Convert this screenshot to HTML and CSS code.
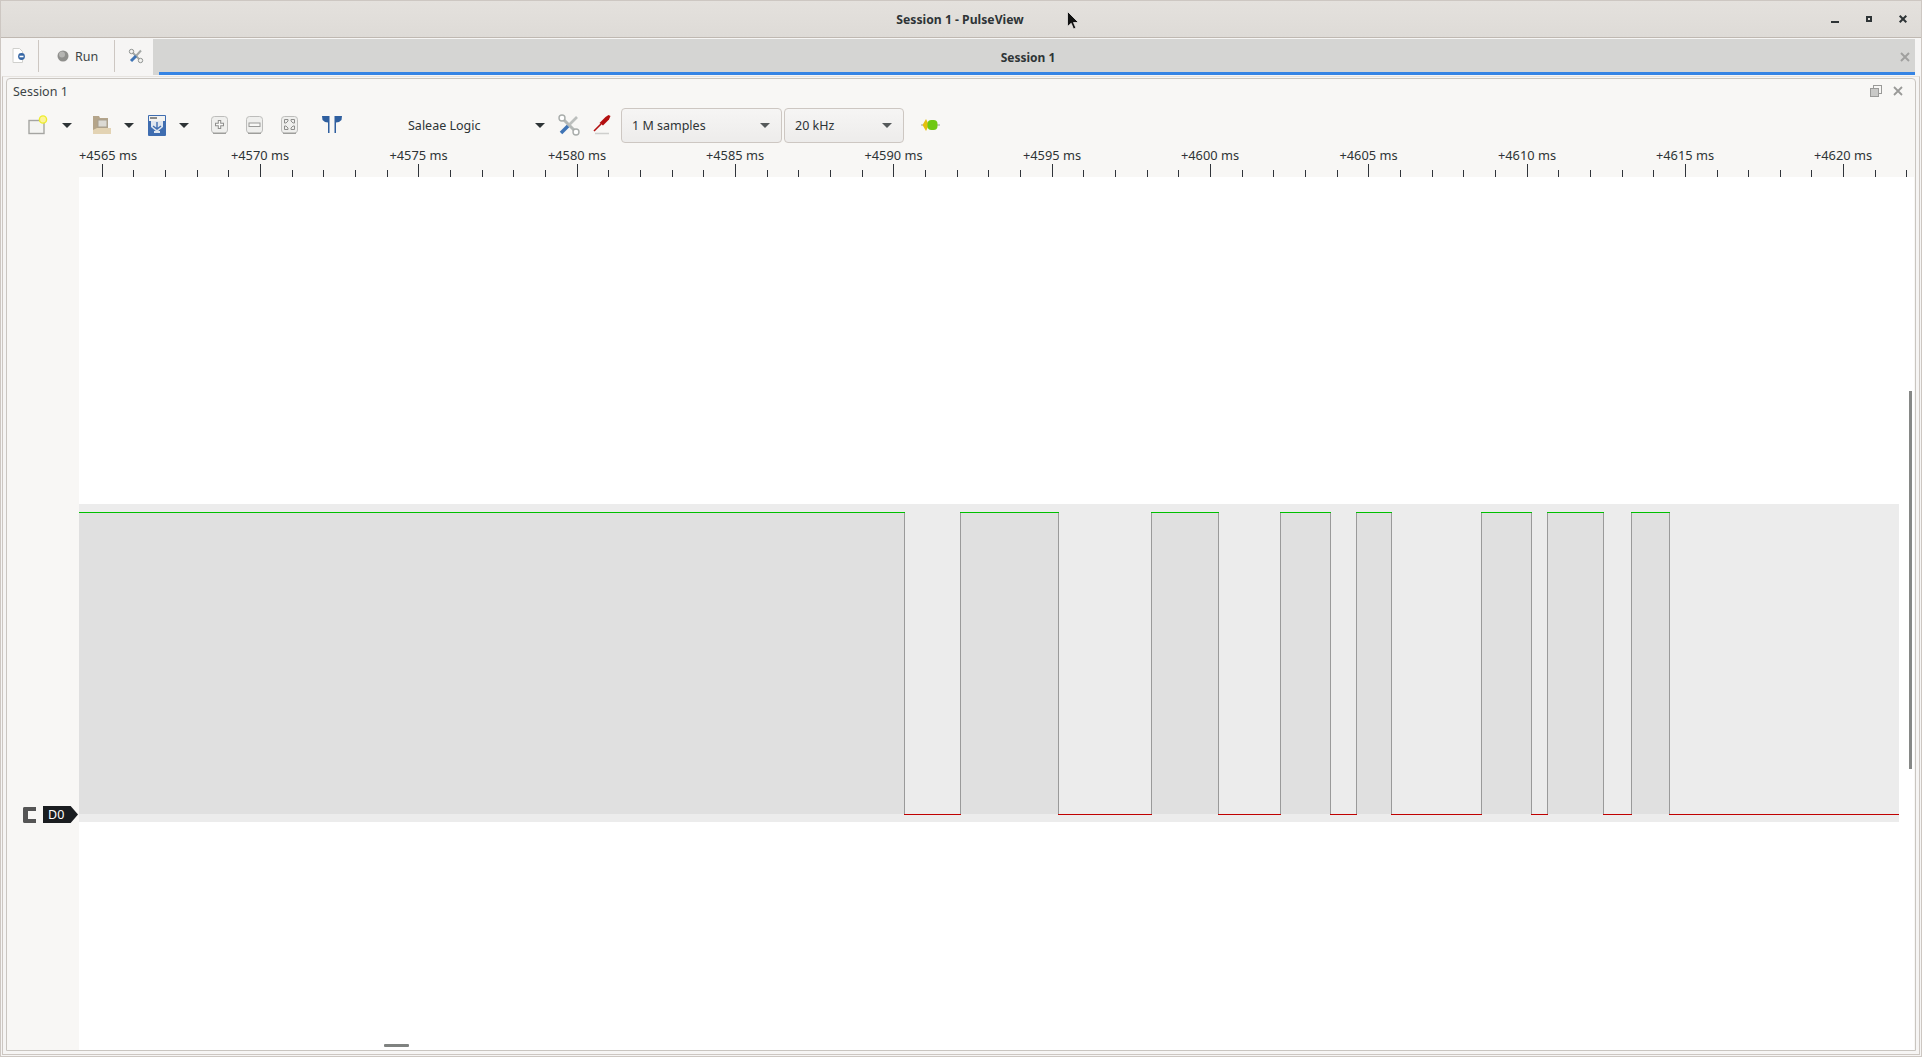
FILE: index.html
```html
<!DOCTYPE html>
<html lang="en">

<head>
  <meta charset="UTF-8">
  <title>Session 1 - PulseView</title>
  <link rel="stylesheet" href="styles.css">
</head>

<body>
  <div class="window">
    <div class="titlebar">
      <span class="title">Session 1 - PulseView</span>
      <div class="wm-buttons">
        <svg width="12" height="12" viewBox="0 0 12 12"><path d="M2 9h8" stroke="#2e3436" stroke-width="2"/></svg>
        <svg width="12" height="12" viewBox="0 0 12 12"><rect x="4" y="4" width="4" height="4" fill="none" stroke="#2e3436" stroke-width="2"/></svg>
        <svg width="12" height="12" viewBox="0 0 12 12"><path d="M2.7 2.7l6.600 6.600M9.300 2.700l-6.600 6.600" stroke="#2e3436" stroke-width="2"/></svg>
      </div>
    </div>

    <div class="tabrow">
      <div class="tabbtn tabbtn-doc">
        <svg width="16" height="16" viewBox="0 0 16 16">
          <path d="M2 .5h6.500l3 3v11H2z" fill="#fff" stroke="#d0d0cd"/>
          <circle cx="10.500" cy="8.500" r="3.400" fill="#3465a4"/>
          <path d="M8.500 8.500h4" stroke="#fff" stroke-width="1.600"/>
        </svg>
      </div>
      <div class="tabbtn tabbtn-run">
        <svg width="12" height="12" viewBox="0 0 12 12"><circle cx="6" cy="6" r="5.500" fill="#8f8f8c"/><circle cx="5" cy="4.500" r="3" fill="#b5b5b2"/></svg>
        <span>Run</span>
      </div>
      <div class="tabbtn tabbtn-tools">
        <svg width="16" height="16" viewBox="0 0 16 16">
          <path d="M3.500 3.500l9 9" stroke="#a4a8a6" stroke-width="2"/>
          <path d="M13 2.500L8 8" stroke="#a4a8a6" stroke-width="2"/>
          <path d="M8 8l-5 5" stroke="#3f74b5" stroke-width="3"/>
          <circle cx="3.500" cy="3.500" r="2.200" fill="#f2f2f0" stroke="#8f9391"/>
          <circle cx="12.500" cy="12.500" r="2.200" fill="#f2f2f0" stroke="#8f9391"/>
        </svg>
      </div>
      <div class="tabstrip">
        <span class="tab-label">Session 1</span>
        <svg class="tab-close" width="10" height="10" viewBox="0 0 10 10"><path d="M1 1l8 8M9 1L1 9" stroke="#a0a09e" stroke-width="2"/></svg>
      </div>
    </div>

    <div class="tabpane">
      <div class="panel">
        <div class="dock-title">
          <span>Session 1</span>
          <div class="dock-buttons">
            <svg width="12" height="12" viewBox="0 0 12 12"><rect x="3.500" y=".5" width="8" height="8" fill="none" stroke="#9a9a98"/><rect x=".5" y="3.500" width="8" height="8" fill="#c9c9c7" stroke="#9a9a98"/></svg>
            <svg width="10" height="10" viewBox="0 0 10 10"><path d="M1 1l8 8M9 1L1 9" stroke="#9a9a98" stroke-width="1.800"/></svg>
          </div>
        </div>

        <div class="toolbar">
          <svg class="tool tool-new" width="20" height="20" viewBox="0 0 20 20">
            <rect x="1" y="5.500" width="15" height="13" fill="#f4f4f2" stroke="#a5a5a2" stroke-width="1.400"/>
            <circle cx="15" cy="4.500" r="3.600" fill="#fdf39a" stroke="#ecec2c" stroke-width="1.400"/>
          </svg>
          <span class="arrow arrow-new"></span>
          <svg class="tool tool-open" width="20" height="20" viewBox="0 0 20 20">
            <path d="M1 1h6l1 2h8v15H1z" fill="#b5a58a"/>
            <rect x="6" y="5" width="9" height="7" fill="#dcdad4" stroke="#a8a08f"/>
            <path d="M1 19v-4l4-2h14v6z" fill="#e3d3b3"/>
          </svg>
          <span class="arrow arrow-open"></span>
          <svg class="tool tool-save" width="18" height="21" viewBox="0 0 18 21">
            <rect width="18" height="21" rx="1" fill="#3f6db0"/>
            <rect x="1" y="1" width="16" height="5" fill="#f3f3f1"/>
            <rect x="2" y="2" width="7" height="2" fill="#8a8a88"/>
            <path d="M3 6h12v6l-6 5-6-5z" fill="#dfe6ef"/>
            <path d="M9 7v7M5 11l4 3 4-3" stroke="#3f6db0" stroke-width="1.400" fill="none"/>
            <rect x="6" y="16" width="6" height="2" fill="#dfe6ef"/>
          </svg>
          <span class="arrow arrow-save"></span>
          <svg class="tool tool-zoomin" width="17" height="18" viewBox="0 0 17 18">
            <rect x=".5" y=".5" width="16" height="16.500" rx="3" fill="#efefed" stroke="#bdbdbb"/>
            <path d="M2 17.300h13" stroke="#8f8f8d"/>
            <path d="M8.500 4v9M4 8.500h9" stroke="#8e8e8c" stroke-width="3.400"/>
            <path d="M8.500 5v7M5 8.500h7" stroke="#f8f8f6" stroke-width="1.400"/>
          </svg>
          <svg class="tool tool-zoomout" width="17" height="18" viewBox="0 0 17 18">
            <rect x=".5" y=".5" width="16" height="16.500" rx="3" fill="#efefed" stroke="#bdbdbb"/>
            <path d="M2 17.300h13" stroke="#8f8f8d"/>
            <rect x="3" y="7" width="11" height="3.500" fill="#f8f8f6" stroke="#9a9a98"/>
          </svg>
          <svg class="tool tool-fit" width="17" height="18" viewBox="0 0 17 18">
            <rect x=".5" y=".5" width="16" height="16.500" rx="3" fill="#efefed" stroke="#bdbdbb"/>
            <path d="M2 17.300h13" stroke="#8f8f8d"/>
            <path d="M3.500 3.500h3.500v1.500l-2 2h-1.500zM13.500 3.500h-3.500v1.500l2 2h1.500zM3.500 13.500h3.500v-1.500l-2-2h-1.500zM13.500 13.500h-3.500v-1.500l2-2h1.500z" fill="none" stroke="#8e8e8c"/>
          </svg>
          <svg class="tool tool-cursor" width="20" height="17" viewBox="0 0 20 17">
            <path d="M0 0h7.500v17H6V6.500L3 6 .5 4zM20 0h-7.500v17H14V6.500L17 6 19.500 4z" fill="#2f5f9f"/>
          </svg>
          <span class="device">Saleae Logic</span>
          <span class="arrow arrow-device"></span>
          <svg class="tool tool-conf" width="22" height="22" viewBox="0 0 22 22">
            <path d="M4 4l14 14" stroke="#b4b8b6" stroke-width="3"/>
            <path d="M19 3L11 11" stroke="#bcbfbd" stroke-width="2.600"/>
            <path d="M10 12l-7 7" stroke="#3f74b5" stroke-width="3.600"/>
            <circle cx="18" cy="18" r="3" fill="#fff" stroke="#a9adab" stroke-width="1.400"/>
            <circle cx="4" cy="4" r="3" fill="#fff" stroke="#a9adab" stroke-width="1.400"/>
          </svg>
          <svg class="tool tool-probe" width="19" height="20" viewBox="0 0 19 20">
            <path d="M1 16L8 9" stroke="#b30f0f" stroke-width="1.600"/>
            <path d="M6.500 8l6-6 3-2 2 1-1.500 3.500-6 6z" fill="#b30f0f"/>
            <path d="M2 18.500h14" stroke="#cfcfcd" stroke-width="1.500"/>
          </svg>
          <div class="combo combo-samples"><span>1 M samples</span><span class="arrow arrow-combo"></span></div>
          <div class="combo combo-rate"><span>20 kHz</span><span class="arrow arrow-combo"></span></div>
          <svg class="tool tool-go" width="19" height="12" viewBox="0 0 19 12">
            <path d="M0 6h19" stroke="#9a9a98"/>
            <path d="M5 0L1.500 6 5 12 8 6z" fill="#e4c00f"/>
            <rect x="6.500" y="1" width="10" height="10" rx="4" fill="#6fc813"/>
          </svg>
        </div>

        <svg class="ruler" width="1835" height="32" viewBox="79 145 1835 32">
          <g class="ruler-labels">
            <text x="108" y="159.500">+4565 ms</text>
            <text x="260" y="159.500">+4570 ms</text>
            <text x="418.500" y="159.500">+4575 ms</text>
            <text x="577" y="159.500">+4580 ms</text>
            <text x="735" y="159.500">+4585 ms</text>
            <text x="893.500" y="159.500">+4590 ms</text>
            <text x="1052" y="159.500">+4595 ms</text>
            <text x="1210" y="159.500">+4600 ms</text>
            <text x="1368.500" y="159.500">+4605 ms</text>
            <text x="1527" y="159.500">+4610 ms</text>
            <text x="1685" y="159.500">+4615 ms</text>
            <text x="1843" y="159.500">+4620 ms</text>
          </g>
          <path class="ticks" d="M102.500 164V177M260.500 164V177M418.500 164V177M577.500 164V177M735.500 164V177M893.500 164V177M1052.500 164V177M1210.500 164V177M1368.500 164V177M1527.500 164V177M1685.500 164V177M1843.500 164V177"/>
          <path class="ticks" d="M133.500 170V177M165.500 170V177M197.500 170V177M228.500 170V177M292.500 170V177M323.500 170V177M355.500 170V177M387.500 170V177M450.500 170V177M482.500 170V177M513.500 170V177M545.500 170V177M608.500 170V177M640.500 170V177M672.500 170V177M703.500 170V177M767.500 170V177M798.500 170V177M830.500 170V177M862.500 170V177M925.500 170V177M957.500 170V177M988.500 170V177M1020.500 170V177M1083.500 170V177M1115.500 170V177M1147.500 170V177M1178.500 170V177M1242.500 170V177M1273.500 170V177M1305.500 170V177M1337.500 170V177M1400.500 170V177M1432.500 170V177M1463.500 170V177M1495.500 170V177M1558.500 170V177M1590.500 170V177M1622.500 170V177M1653.500 170V177M1717.500 170V177M1748.500 170V177M1780.500 170V177M1811.500 170V177M1875.500 170V177M1906.500 170V177"/>
        </svg>

        <div class="trace-area">
          <div class="gutter">
            <div class="channel">
              <span class="grip"></span>
              <span class="tag">D0</span>
            </div>
          </div>
          <div class="viewport">
            <svg class="wave" width="1835" height="873" viewBox="79 177 1835 873">
              <rect class="band" x="79" y="504" width="1820" height="318"/>
              <g class="high">
                <rect x="79" y="512" width="825" height="302"/>
                <rect x="960" y="512" width="98" height="302"/>
                <rect x="1151" y="512" width="67" height="302"/>
                <rect x="1280" y="512" width="50" height="302"/>
                <rect x="1356" y="512" width="35" height="302"/>
                <rect x="1481" y="512" width="50" height="302"/>
                <rect x="1547" y="512" width="56" height="302"/>
                <rect x="1631" y="512" width="38" height="302"/>
              </g>
              <path class="edge" d="M904.500 512V814M960.500 512V814M1058.500 512V814M1151.500 512V814M1218.500 512V814M1280.500 512V814M1330.500 512V814M1356.500 512V814M1391.500 512V814M1481.500 512V814M1531.500 512V814M1547.500 512V814M1603.500 512V814M1631.500 512V814M1669.500 512V814"/>
              <path class="level-high" d="M79 512.500H905M960 512.500H1059M1151 512.500H1219M1280 512.500H1331M1356 512.500H1392M1481 512.500H1532M1547 512.500H1604M1631 512.500H1670"/>
              <path class="level-low" d="M904 814.500H961M1058 814.500H1152M1218 814.500H1281M1330 814.500H1357M1391 814.500H1482M1531 814.500H1548M1603 814.500H1632M1669 814.500H1899"/>
            </svg>
            <div class="vscroll"></div>
            <div class="hscroll"></div>
          </div>
        </div>
      </div>
    </div>
  </div>

  <svg class="pointer" width="13" height="19" viewBox="0 0 13 19">
    <path d="M.5.500v15l3.700-3.200 2.300 5.700 2.400-1-2.400-5.500H11.500z" fill="#111" stroke="#e8e6e3" stroke-width=".8"/>
  </svg>
</body>

</html>
```

FILE: styles.css
```css
* {
  margin: 0;
  padding: 0;
  box-sizing: border-box;
}

html,
body {
  width: 100%;
  height: 100%;
  overflow: hidden;
}

body {
  font-family: "Noto Sans", "Open Sans", sans-serif;
  font-size: 12.5px;
  color: #2e3436;
  background: #cdc7c2;
}

.window {
  width: 1922px;
  height: 1057px;
  display: flex;
  flex-direction: column;
  background: #f6f5f4;
  border: 1px solid #cdc7c2;
}

.titlebar {
  height: 37px;
  flex: none;
  display: flex;
  align-items: center;
  justify-content: center;
  position: relative;
  background: linear-gradient(#e4e1dd, #dedbd7);
  border-bottom: 1px solid #bfb8b1;
}

.title {
  font-weight: 700;
  font-size: 12.2px;
  margin-right: 2px;
}

.wm-buttons {
  position: absolute;
  right: 12px;
  top: 12px;
  display: flex;
  gap: 22px;
}

.tabrow {
  height: 38px;
  flex: none;
  display: flex;
  padding-right: 6px;
  background: #f6f5f4;
}

.tabbtn {
  height: 32px;
  margin-top: 2px;
  display: flex;
  align-items: center;
  justify-content: center;
  border-right: 1px solid #cdc7c2;
}

.tabbtn-doc {
  width: 38px;
}

.tabbtn-doc svg {
  margin-right: 2px;
}

.tabbtn-run {
  width: 76px;
  justify-content: flex-start;
  padding-left: 18px;
  gap: 6px;
  color: #3c4446;
  font-size: 12.5px;
}

.tabbtn-tools {
  width: 38px;
  border-right: 0;
  padding-left: 4px;
}

.tabstrip {
  flex: 1;
  height: 36px;
  margin-top: 1px;
  display: flex;
  align-items: center;
  justify-content: center;
  position: relative;
  background: #d5d5d3;
  padding: 0 18px 0 6px;
}

.tabstrip::after {
  content: "";
  position: absolute;
  left: 6px;
  right: 0;
  bottom: 0;
  height: 3px;
  background: #3584e4;
}

.tab-label {
  font-weight: 700;
  font-size: 12px;
}

.tab-close {
  position: absolute;
  right: 5px;
  top: 13px;
}

.tabpane {
  flex: 1;
  display: flex;
  min-height: 0;
  margin: 0 1px 1px 1px;
  padding: 1px 3px 3px 3px;
  border: 1px solid #cdc7c2;
  border-top-color: #e6e3df;
}

.panel {
  flex: 1;
  display: flex;
  flex-direction: column;
  min-width: 0;
  padding-right: 1px;
  background: #f8f7f5;
  border: 1px solid #c9c5c0;
  border-radius: 4px 4px 0 0;
}

.dock-title {
  height: 25px;
  flex: none;
  padding: 0 6px;
  display: flex;
  align-items: center;
  justify-content: space-between;
  font-size: 12.5px;
  color: #3c4446;
}

.dock-buttons {
  display: flex;
  align-items: center;
  gap: 11px;
  padding-right: 5px;
  margin-top: -2px;
}

.toolbar {
  height: 41px;
  flex: none;
  display: flex;
  align-items: center;
  padding-top: 1px;
}

.tool {
  flex: none;
}

.arrow {
  flex: none;
  width: 0;
  height: 0;
  border-left: 5.5px solid transparent;
  border-right: 5.5px solid transparent;
  border-top: 5px solid #2e3436;
}

.tool-new { margin-left: 21px; }
.arrow-new { margin-left: 14px; }
.tool-open { margin-left: 20px; }
.arrow-open { margin-left: 12px; }
.tool-save { margin-left: 14px; }
.arrow-save { margin-left: 13px; }
.tool-zoomin { margin-left: 22px; }
.tool-zoomout { margin-left: 18px; }
.tool-fit { margin-left: 18px; }
.tool-cursor { margin-left: 24px; margin-top: -2px; }

.device {
  width: 125px;
  margin-left: 66px;
  font-size: 12.5px;
}

.arrow-device { margin-left: 2px; }
.tool-conf { margin-left: 13px; }
.tool-probe { margin-left: 13px; }

.combo {
  height: 35px;
  display: flex;
  align-items: center;
  justify-content: space-between;
  padding: 0 11px 0 10px;
  border: 1px solid #cdc7c2;
  border-radius: 4px;
  background: linear-gradient(#f6f5f4, #edeceb);
  font-size: 12.5px;
}

.combo-samples {
  width: 161px;
  margin-left: 9px;
}

.combo-rate {
  width: 120px;
  margin-left: 2px;
}

.arrow-combo {
  border-top-color: #55595a;
}

.tool-go { margin-left: 17px; }

.ruler {
  display: block;
  flex: none;
  margin-left: 72px;
}

.ruler-labels text {
  font-family: "Noto Sans", "Open Sans", sans-serif;
  font-size: 12.8px;
  fill: #2e3436;
  text-anchor: middle;
}

.ticks {
  stroke: #30343a;
  stroke-width: 1;
  fill: none;
  shape-rendering: crispEdges;
}

.trace-area {
  flex: 1;
  display: flex;
  min-height: 0;
}

.gutter {
  width: 72px;
  flex: none;
  padding-top: 629px;
}

.channel {
  display: flex;
  align-items: center;
  padding-left: 16px;
  gap: 7px;
}

.grip {
  width: 13px;
  height: 16px;
  border: 4px solid #555;
  border-left-width: 5px;
  border-right: 0;
  border-radius: 2px 0 0 2px;
}

.tag {
  width: 35px;
  height: 17px;
  background: #1a1d20;
  clip-path: polygon(0 0, 79% 0, 100% 50%, 79% 100%, 0 100%);
  color: #fff;
  font-size: 12.5px;
  line-height: 17px;
  padding-left: 5px;
}

.viewport {
  flex: 1;
  position: relative;
  background: #fff;
}

.wave {
  display: block;
}

.band {
  fill: #ececec;
}

.high rect {
  fill: #e0e0e0;
}

.edge {
  stroke: #9a9a9a;
  stroke-width: 1;
  fill: none;
  shape-rendering: crispEdges;
}

.level-high {
  stroke: #00c000;
  fill: none;
  shape-rendering: crispEdges;
}

.level-low {
  stroke: #c00000;
  fill: none;
  shape-rendering: crispEdges;
}

.vscroll {
  position: absolute;
  right: 2px;
  top: 214px;
  width: 3px;
  height: 378px;
  background: #868886;
}

.hscroll {
  position: absolute;
  left: 305px;
  top: 867px;
  width: 25px;
  height: 3px;
  background: #7f8280;
  border-radius: 1px;
}

.pointer {
  position: absolute;
  left: 1067px;
  top: 11px;
}
```
